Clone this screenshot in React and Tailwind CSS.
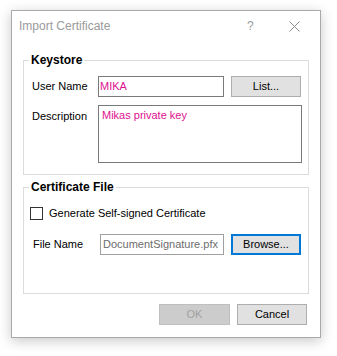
import React from "react";

const font = { fontFamily: '"Liberation Sans", Arial, sans-serif' };

function Btn({ children, className = "" }) {
  return (
    <div
      className={
        "flex items-center justify-center h-[21px] text-[11px] leading-none " +
        className
      }
    >
      {children}
    </div>
  );
}

export default function App() {
  return (
    <div
      className="w-[337px] h-[356px] bg-white pt-[10px] pl-[11px] text-black"
      style={font}
    >
      <div className="w-[310px] h-[328px] bg-white border border-[#a9a9a9] shadow-[0_3px_12px_rgba(0,0,0,0.22)] flex flex-col">
        {/* Title bar */}
        <div className="h-[29px] flex items-center pl-[7px] pt-[1px] shrink-0">
          <span className="text-[12px] text-[#9a9a9a]">Import Certificate</span>
          <span className="ml-auto text-[12px] text-[#9a9a9a] w-[8px]">?</span>
          <svg
            className="ml-[34px] mr-[20px]"
            width="11"
            height="11"
            viewBox="0 0 11 11"
          >
            <path
              d="M0.5 0.5 L10.5 10.5 M10.5 0.5 L0.5 10.5"
              stroke="#8a8a8a"
              strokeWidth="1"
              fill="none"
            />
          </svg>
        </div>

        {/* Keystore group */}
        <div className="relative mx-[11px] mt-[20px] h-[115px] border border-[#dcdcdc] pt-[15px] pl-[8px] shrink-0">
          <span className="absolute -top-[10px] left-[5px] bg-white px-[2px] text-[12px] font-bold leading-[18px]">
            Keystore
          </span>
          <div className="flex items-center h-[21px]">
            <span className="w-[66px] text-[11px]">User Name</span>
            <div className="w-[126px] h-[21px] border border-[#7a7a7a] flex items-center pl-[1px] text-[11px] text-[#e0108f]">
              MIKA
            </div>
            <Btn className="ml-[7px] w-[70px] bg-[#e1e1e1] border border-[#adadad]">
              List...
            </Btn>
          </div>
          <div className="flex mt-[8px]">
            <span className="w-[66px] text-[11px] pt-[3px]">Description</span>
            <div className="w-[204px] h-[58px] border border-[#7a7a7a] pl-[3px] pt-[1px] text-[11px] text-[#e0108f] leading-[16px]">
              Mikas private key
            </div>
          </div>
        </div>

        {/* Certificate File group */}
        <div className="relative mx-[11px] mt-[12px] h-[107px] border border-[#dcdcdc] pt-[19px] pl-[6px] shrink-0">
          <span className="absolute -top-[10px] left-[5px] bg-white px-[2px] text-[12px] font-bold leading-[18px]">
            Certificate File
          </span>
          <div className="flex items-center h-[13px]">
            <div className="w-[13px] h-[13px] border border-[#333333] bg-white" />
            <span className="ml-[6px] text-[11px]">
              Generate Self-signed Certificate
            </span>
          </div>
          <div className="flex items-center h-[21px] mt-[14px] pl-[3px]">
            <span className="w-[67px] text-[11px]">File Name</span>
            <div className="w-[124px] h-[21px] border border-[#a0a0a0] flex items-center pl-[2px] text-[11px] text-[#6d6d6d]">
              DocumentSignature.pfx
            </div>
            <Btn className="ml-[7px] w-[70px] bg-[#e1e1e1] border-2 border-[#0078d7]">
              Browse...
            </Btn>
          </div>
        </div>

        {/* Buttons */}
        <div className="flex justify-end mt-[10px] pr-[13px] gap-[7px]">
          <Btn className="w-[71px] bg-[#cccccc] border border-[#bfbfbf] text-[#a0a0a0]">
            OK
          </Btn>
          <Btn className="w-[70px] bg-[#e1e1e1] border border-[#adadad]">
            Cancel
          </Btn>
        </div>
      </div>
    </div>
  );
}
